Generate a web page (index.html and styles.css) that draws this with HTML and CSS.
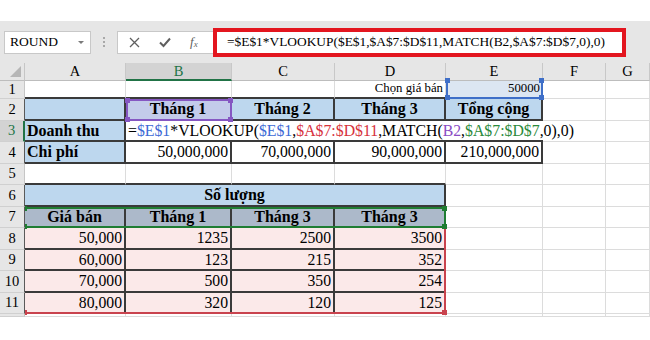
FILE: index.html
```html
<!DOCTYPE html>
<html lang="vi">
<head>
    <meta charset="UTF-8">
    <meta name="viewport" content="width=device-width, initial-scale=1.0">
    <title>VLOOKUP + MATCH</title>
    <link rel="stylesheet" href="styles.css">
</head>
<body>
    <div class="top"></div>

    <div class="toolbar">
        <div class="namebox">ROUND<span class="caret"></span></div>
        <div class="grip"><i></i><i></i><i></i></div>
        <div class="fxbox">
            <svg width="11" height="11" viewBox="0 0 11 11"><path d="M1 1 L10 10 M10 1 L1 10" stroke="#5f5f5f" stroke-width="1.3" fill="none"/></svg>
            <svg width="12" height="11" viewBox="0 0 12 11"><path d="M1 5.5 L4.5 9 L11 1.5" stroke="#5f5f5f" stroke-width="2" fill="none"/></svg>
            <span class="fx"><i>f</i><sub>x</sub></span>
        </div>
        <div class="formula">=$E$1*VLOOKUP($E$1,$A$7:$D$11,MATCH(B2,$A$7:$D$7,0),0)</div>
    </div>

    <div class="sheet-wrap">
        <div class="sheet">
            <!-- column headers -->
            <div class="corner"></div>
            <div class="ch">A</div>
            <div class="ch sel">B</div>
            <div class="ch">C</div>
            <div class="ch">D</div>
            <div class="ch">E</div>
            <div class="ch">F</div>
            <div class="ch">G</div>

            <!-- row 1 -->
            <div class="rh">1</div>
            <div class="c db"></div>
            <div class="c db"></div>
            <div class="c db"></div>
            <div class="c db num sm">Chọn giá bán</div>
            <div class="c db num sm e1">50000</div>
            <div class="c"></div>
            <div class="c"></div>

            <!-- row 2 -->
            <div class="rh edge">2</div>
            <div class="c hd dk"></div>
            <div class="c hd dk b2">Tháng 1</div>
            <div class="c hd dk">Tháng 2</div>
            <div class="c hd dk">Tháng 3</div>
            <div class="c hd dk">Tổng cộng</div>
            <div class="c"></div>
            <div class="c"></div>

            <!-- row 3 -->
            <div class="rh edge sel">3</div>
            <div class="c hd dk left">Doanh thu</div>
            <div class="c db nr"></div>
            <div class="c db nr"></div>
            <div class="c db nr"></div>
            <div class="c db nr"></div>
            <div class="c"></div>
            <div class="c"></div>

            <!-- row 4 -->
            <div class="rh edge">4</div>
            <div class="c hd dk left">Chi phí</div>
            <div class="c dk num">50,000,000</div>
            <div class="c dk num">70,000,000</div>
            <div class="c dk num">90,000,000</div>
            <div class="c dk num">210,000,000</div>
            <div class="c"></div>
            <div class="c"></div>

            <!-- row 5 -->
            <div class="rh">5</div>
            <div class="c db"></div>
            <div class="c db"></div>
            <div class="c db"></div>
            <div class="c db"></div>
            <div class="c"></div>
            <div class="c"></div>
            <div class="c"></div>

            <!-- row 6 -->
            <div class="rh edge">6</div>
            <div class="c hd dk span4">Số lượng</div>
            <div class="c"></div>
            <div class="c"></div>
            <div class="c"></div>

            <!-- row 7 -->
            <div class="rh edge">7</div>
            <div class="c th dk">Giá bán</div>
            <div class="c th dk">Tháng 1</div>
            <div class="c th dk">Tháng 3</div>
            <div class="c th dk">Tháng 3</div>
            <div class="c"></div>
            <div class="c"></div>
            <div class="c"></div>

            <!-- row 8 -->
            <div class="rh edge">8</div>
            <div class="c pk dk num">50,000</div>
            <div class="c pk dk num">1235</div>
            <div class="c pk dk num">2500</div>
            <div class="c pk dk num">3500</div>
            <div class="c"></div>
            <div class="c"></div>
            <div class="c"></div>

            <!-- row 9 -->
            <div class="rh edge">9</div>
            <div class="c pk dk num">60,000</div>
            <div class="c pk dk num">123</div>
            <div class="c pk dk num">215</div>
            <div class="c pk dk num">352</div>
            <div class="c"></div>
            <div class="c"></div>
            <div class="c"></div>

            <!-- row 10 -->
            <div class="rh edge">10</div>
            <div class="c pk dk num">70,000</div>
            <div class="c pk dk num">500</div>
            <div class="c pk dk num">350</div>
            <div class="c pk dk num">254</div>
            <div class="c"></div>
            <div class="c"></div>
            <div class="c"></div>

            <!-- row 11 -->
            <div class="rh edge">11</div>
            <div class="c pk dk num">80,000</div>
            <div class="c pk dk num">320</div>
            <div class="c pk dk num">120</div>
            <div class="c pk dk num">125</div>
            <div class="c"></div>
            <div class="c"></div>
            <div class="c"></div>

            <!-- partial row 12 -->
            <div class="rh"></div>
            <div class="c"></div>
            <div class="c"></div>
            <div class="c"></div>
            <div class="c"></div>
            <div class="c"></div>
            <div class="c"></div>
            <div class="c"></div>
        </div>

        <!-- layer above the cells: overflowing formula text and reference highlights -->
        <div class="marks">
            <div class="ftext">=<span class="blue-t">$E$1</span>*VLOOKUP(<span class="blue-t">$E$1</span>,<span class="red-t">$A$7:$D$11</span>,MATCH(<span class="purple-t">B2</span>,<span class="green-t">$A$7:$D$7</span>,0),0)</div>
            <div class="hl hl-blue"><i class="tl"></i><i class="tr"></i><i class="bl"></i><i class="br"></i></div>
            <div class="hl hl-purple"><i class="tl"></i><i class="tr"></i><i class="bl"></i><i class="br"></i></div>
            <div class="hl hl-red"><i class="bl mark"></i><i class="br"></i></div>
            <div class="hl hl-green"><i class="tl mark"></i><i class="tr"></i><i class="bl mark"></i><i class="br"></i></div>
        </div>
    </div>
</body>
</html>
```

FILE: styles.css
```css
* {
    margin: 0;
    padding: 0;
    box-sizing: border-box;
}

body {
    font-family: 'Liberation Serif', 'Times New Roman', serif;
    background: #fff;
    color: #000;
    width: 650px;
    height: 340px;
    overflow: hidden;
}

.top {
    height: 21px;
}

/* formula bar */
.toolbar {
    height: 42px;
    background: #e6e6e6;
    display: flex;
    align-items: center;
    padding-left: 4px;
}

.namebox {
    width: 87px;
    height: 23px;
    background: #fff;
    border: 1px solid #c8c8c8;
    display: flex;
    align-items: center;
    justify-content: space-between;
    padding: 0 6px 0 5px;
    font-size: 13.5px;
}

.caret {
    width: 0;
    height: 0;
    border-left: 3px solid transparent;
    border-right: 3px solid transparent;
    border-top: 3px solid #7a7a7a;
}

.grip {
    width: 26px;
    display: flex;
    flex-direction: column;
    align-items: center;
    gap: 2px;
}

.grip i {
    width: 2px;
    height: 2px;
    background: #a8a8a8;
}

.fxbox {
    width: 96px;
    height: 23px;
    background: #fff;
    border: 1px solid #c8c8c8;
    border-right: none;
    display: flex;
    align-items: center;
    gap: 19px;
    padding-left: 11px;
}

.fx {
    font-size: 13px;
    color: #5f5f5f;
    line-height: 1;
}

.fx sub {
    font-size: 9px;
    font-style: italic;
    vertical-align: -1px;
}

.formula {
    width: 413px;
    height: 29px;
    border: 4px solid #e3161f;
    background: #fff;
    font-size: 13.4px;
    display: flex;
    align-items: center;
    padding-left: 10px;
    white-space: nowrap;
}

/* sheet grid: cells and a marks layer share one grid cell */
.sheet-wrap {
    display: grid;
}

.sheet,
.marks {
    grid-area: 1 / 1;
    display: grid;
    grid-template-columns: 25px 101px 106px 103px 111px 97px 63px 1fr;
    grid-template-rows: 18px 18px repeat(10, 21.5px) 3px;
}

.marks {
    pointer-events: none;
}

.corner {
    background: #e6e6e6;
    border-right: 1px solid #c6c6c6;
    border-bottom: 1px solid #bdbdbd;
    position: relative;
}

.corner::after {
    content: '';
    position: absolute;
    right: 3px;
    bottom: 3px;
    border-left: 11px solid transparent;
    border-bottom: 11px solid #b6b6b6;
}

.ch {
    background: #e6e6e6;
    border-right: 1px solid #c8c8c8;
    border-bottom: 1px solid #bdbdbd;
    font-size: 14.5px;
    display: flex;
    align-items: center;
    justify-content: center;
}

.ch.sel {
    background: #d3d3d3;
    color: #217346;
    border-bottom: 2px solid #217346;
}

.rh {
    background: #e6e6e6;
    border-right: 1px solid #c6c6c6;
    border-bottom: 1px solid #d0d0d0;
    font-size: 14.5px;
    display: flex;
    align-items: center;
    justify-content: center;
}

.rh.edge {
    border-right: 1px solid #5a5a5a;
}

.rh.sel {
    background: #d3d3d3;
    color: #217346;
    border-right: 2px solid #217346;
}

.c {
    border-right: 1px solid #dcdcdc;
    border-bottom: 1px solid #dcdcdc;
    font-size: 15.7px;
    line-height: 1.15;
    display: flex;
    align-items: flex-end;
    padding: 0 2px;
    white-space: nowrap;
}

.num { justify-content: flex-end; }
.sm { font-size: 12.8px; padding-bottom: 1px; }
.e1 { background: #dce6f2; }

.hd {
    background: #bdd7ee;
    font-weight: bold;
    font-size: 16px;
    justify-content: center;
}

.hd.left { justify-content: flex-start; }
.b2 { background: #c3cbea; }
.span4 { grid-column: span 4; }

.th {
    background: #acb9ca;
    font-weight: bold;
    font-size: 16px;
    justify-content: center;
}

.pk { background: #fbe9e9; }

.dk {
    border-right: 2px solid #3a3a3a;
    border-bottom: 2px solid #3a3a3a;
}

.db { border-bottom: 2px solid #3a3a3a; }
.nr { border-right: none; }

/* overflowing formula in B3 */
.ftext {
    grid-column: 3 / 9;
    grid-row: 4 / 5;
    font-size: 15.8px;
    line-height: 1.15;
    display: flex;
    align-items: flex-end;
    padding: 0 0 2px 2px;
    white-space: nowrap;
}

.blue-t { color: #3d6ad6; }
.red-t { color: #d7323d; }
.purple-t { color: #8a4cc4; }
.green-t { color: #2b8a3b; }

/* range highlights */
.hl {
    position: relative;
}

.hl i {
    position: absolute;
    width: 5px;
    height: 5px;
}

.hl .tl { left: -3px; top: -3px; }
.hl .tr { right: -3px; top: -3px; }
.hl .bl { left: -3px; bottom: -3px; }
.hl .br { right: -3px; bottom: -3px; }
.hl .mark { width: 2px; left: 0; }

.hl-blue {
    grid-column: 6 / 7;
    grid-row: 2 / 3;
    border: 2px solid #3f6fc8;
    border-top-width: 0;
}

.hl-blue i { background: #3f6fc8; }

.hl-purple {
    grid-column: 3 / 4;
    grid-row: 3 / 4;
    border: 2px solid #8557c2;
}

.hl-purple i { background: #8557c2; }

.hl-red {
    grid-column: 2 / 6;
    grid-row: 8 / 13;
    border-right: 2px solid #c9434e;
    border-bottom: 2px solid #c9434e;
}

.hl-red i { background: #c9434e; }

.hl-green {
    grid-column: 2 / 6;
    grid-row: 8 / 9;
    border: 2px solid #1f7d33;
    border-left: none;
}

.hl-green i { background: #1f7d33; }
```
